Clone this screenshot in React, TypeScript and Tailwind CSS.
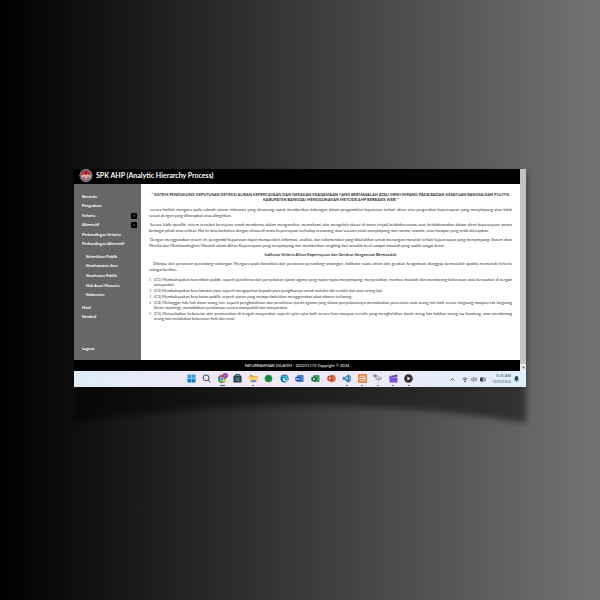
import React from "react";

const mainLinks = [
  { label: "Beranda" },
  { label: "Pengaduan" },
  { label: "Kriteria", toggle: true },
  { label: "Alternatif", toggle: true },
  { label: "Perbandingan Kriteria" },
  { label: "Perbandingan Alternatif" },
];

const criteriaLinks = [
  "Ketertiban Publik",
  "Keselamatan Jiwa",
  "Kesehatan Publik",
  "Hak Asasi Manusia",
  "Kebencian",
];

const indicators = [
  "(C1) Membahayakan ketertiban publik, seperti penafsiran dan penyebaran ajaran agama yang nyata-nyata menyimpang, menyesatkan, memicu masalah dan mendorong kekacauan atau kerusuhan di tengah masyarakat.",
  "(C2) Membahayakan keselamatan jiwa, seperti mengajarkan kepada para pengikutnya untuk melukai diri sendiri dan atau orang lain.",
  "(C3) Membahayakan kesehatan publik, seperti ajaran yang memperbolehkan menggunakan obat-obatan terlarang.",
  "(C4) Melanggar hak-hak dasar orang lain, seperti pengkondisian dan penafsiran ajaran agama yang dalam penyebarannya memaksakan pencucian otak orang lain baik secara langsung maupun tak langsung (brain-washing), memobilisasi pendanaan secara manipulatif dari masyarakat.",
  "(C5) Menyebarkan kebencian dan permusuhan di tengah masyarakat, seperti syiar-syiar baik secara lisan maupun tertulis yang menghalalkan darah orang lain bahkan orang tua kandung, atau mendorong orang lain melakukan kekerasan fisik dan teror.",
];

function Logo() {
  return (
    <svg viewBox="0 0 28 28" className="size-[14px] shrink-0" aria-hidden="true">
      <circle cx="14" cy="13" r="13" fill="#a9a5a8" />
      <circle cx="14" cy="13" r="12" fill="#5b5f72" />
      <circle cx="14" cy="13" r="9.5" fill="#d9c4c6" />
      <path d="M5 12a9 9 0 0 1 18 0l-3 1-2-3-4 3-4-3-2 3z" fill="#c8282c" />
      <path d="M7 17l4-3 3 2 3-2 4 3-3 4h-8z" fill="#b5474a" />
      <path d="M11 12h6v5l-3 3-3-3z" fill="#e0b9ae" />
      <path d="M13 5h2v5h-2z" fill="#2f2628" />
    </svg>
  );
}

function Letter({ color, dark, children }: { color: string; dark: string; children: React.ReactNode }) {
  return (
    <>
      <rect x="5" y="2" width="14" height="16" rx="2" fill={color} />
      <rect x="1" y="6" width="11" height="10" rx="1" fill={dark} />
      {children}
    </>
  );
}

const apps: { name: string; running?: boolean; active?: boolean; art: React.ReactNode }[] = [
  {
    name: "Start",
    art: (
      <>
        <path d="M1 1h8.5v8.5H1zM10.5 1H19v8.5h-8.5z" fill="#2fa3e0" />
        <path d="M1 10.500h8.500V19H1zM10.500 10.500H19V19h-8.500z" fill="#147cc4" />
      </>
    ),
  },
  {
    name: "Search",
    art: (
      <g fill="none" stroke="#343342" strokeWidth="2">
        <circle cx="9" cy="8.500" r="6.500" />
        <path d="M13.500 13.500L19 19" />
      </g>
    ),
  },
  {
    name: "Chrome",
    active: true,
    art: (
      <>
        <circle cx="9" cy="11" r="9" fill="#2e9c4f" />
        <path d="M1.200 6.500A9 9 0 0 1 17 7L9 11z" fill="#dc4437" />
        <path d="M18 9a9 9 0 0 1-9 11l4-8z" fill="#f3c531" />
        <circle cx="9" cy="11" r="4.500" fill="#fff" />
        <circle cx="9" cy="11" r="3.300" fill="#3d7de0" />
        <circle cx="16" cy="3.500" r="6" fill="#9143a7" />
        <path d="M14.500 1.500h3v4h-3z" fill="#c58bd4" />
      </>
    ),
  },
  {
    name: "Store",
    art: (
      <>
        <path d="M6 4V1h8v3" fill="none" stroke="#1c4a70" strokeWidth="2" />
        <rect x="1" y="3.500" width="18" height="15.500" rx="2" fill="#1d3f61" />
        <path d="M6 7.500h3.500V11H6z" fill="#8a6d5c" />
        <path d="M10.500 7.500H14V11h-3.500z" fill="#6c9a62" />
        <path d="M6 12h3.500v3.500H6z" fill="#38a5e0" />
        <path d="M10.500 12H14v3.500h-3.500z" fill="#b59d55" />
      </>
    ),
  },
  {
    name: "Files",
    running: true,
    art: (
      <>
        <path d="M1 2h7l2 3h9v5H1z" fill="#d9a12e" />
        <path d="M1 6h18v12H1z" fill="#f7cf62" />
        <path d="M5 14h10v4H5z" fill="#3b8ed0" />
      </>
    ),
  },
  {
    name: "Spotify",
    art: (
      <>
        <circle cx="10" cy="10" r="8.500" fill="#1c9a48" />
        <path d="M5 7q5-2 10 1M5.500 10.500q5-1.500 8.500 1M6 13.500q4-1 7 .8" fill="none" stroke="#0d5e2b" strokeWidth="1.500" />
      </>
    ),
  },
  {
    name: "Edge",
    art: (
      <>
        <circle cx="10" cy="10" r="9" fill="#1576bd" />
        <path d="M1.500 9a9 9 0 0 1 17.300 2c0 3-5 3.500-6 1.500C14 7 7 4 1.500 9z" fill="#37bcb8" />
        <path d="M19 13c-3 2-8 1.500-8-1.500 0-2-2-3-4-2-2 5 4 8 9 7z" fill="#e6f3fb" />
      </>
    ),
  },
  {
    name: "Word",
    art: (
      <Letter color="#3c82d2" dark="#174a9c">
        <path d="M3 8.500l1.500 5 2-4 2 4 1.500-5" fill="none" stroke="#fff" strokeWidth="1.300" />
      </Letter>
    ),
  },
  {
    name: "Excel",
    art: (
      <Letter color="#36a269" dark="#11633b">
        <path d="M4 8l5 6M9 8l-5 6" fill="none" stroke="#fff" strokeWidth="1.500" />
      </Letter>
    ),
  },
  {
    name: "PowerPoint",
    art: (
      <>
        <circle cx="11" cy="10" r="8.500" fill="#e36a4a" />
        <rect x="1" y="5" width="11" height="10" rx="1" fill="#b9341d" />
        <path d="M5 13.500v-6h2.500a1.800 1.800 0 0 1 0 3.500H5" fill="none" stroke="#fff" strokeWidth="1.400" />
      </>
    ),
  },
  {
    name: "VS Code",
    running: true,
    art: (
      <g fill="none" strokeWidth="3" strokeLinejoin="round">
        <path d="M14 3v14L2 7" stroke="#1c6fb5" />
        <path d="M2 13L14 3l4 2v10l-4 2" stroke="#2b8bd0" />
      </g>
    ),
  },
  {
    name: "XAMPP",
    running: true,
    art: (
      <>
        <rect x="0" y="0" width="20" height="20" rx="3" fill="#e8833b" />
        <path d="M6 5h8c1 0 2 1 2 2.500S15 10 14 10H6c-1 0-2-1-2-2.500S5 5 6 5zM6 10h8c1 0 2 1 2 2.500S15 15 14 15H6c-1 0-2-1-2-2.500S5 10 6 10z" fill="none" stroke="#fff" strokeWidth="1.800" />
      </>
    ),
  },
  {
    name: "Snipping Tool",
    running: true,
    art: (
      <g fill="none" strokeWidth="1.800">
        <path d="M7 1v11h11" stroke="#7e8b99" />
        <path d="M2 4h10v14" stroke="#a7afb9" />
        <circle cx="4" cy="4" r="2.500" stroke="#56616e" />
        <circle cx="16" cy="9" r="2.500" stroke="#c98c74" />
      </g>
    ),
  },
  {
    name: "Clipchamp",
    running: true,
    art: (
      <>
        <path d="M1 5l17-4 1 5-18 3z" fill="#5b30a5" />
        <path d="M1 8h18v11H1z" fill="#8151d8" />
        <path d="M4 4.500l4 3M10 3l4 3" stroke="#b994f2" strokeWidth="2" />
      </>
    ),
  },
  {
    name: "Media Player",
    running: true,
    art: (
      <>
        <circle cx="10" cy="10" r="9.500" fill="#282126" />
        <circle cx="10" cy="10" r="6.500" fill="none" stroke="#70564a" strokeWidth="1" />
        <path d="M7.500 5.500l7 4.500-7 4.500z" fill="#fff" />
      </>
    ),
  },
];

function Taskbar() {
  return (
    <footer className="grid h-4 grid-cols-[1fr_auto_1fr] items-center bg-linear-to-r/srgb from-[#dfedf8] via-[#f3e6f5] via-40% to-[#e0effa]">
      <div />
      <nav aria-label="Taskbar" className="grid w-[233px] grid-cols-15">
        {apps.map((app) => (
          <button
            key={app.name}
            aria-label={app.name}
            className="flex h-4 flex-col items-center justify-end gap-px"
          >
            <svg viewBox="0 0 20 20" className="size-[9px] overflow-visible" aria-hidden="true">
              {app.art}
            </svg>
            <span className="flex h-[3px] items-center">
              {app.active && <span className="h-px w-[5px] bg-[#28698f]" />}
              {app.running && <span className="h-px w-[2px] bg-[#777582]" />}
            </span>
          </button>
        ))}
      </nav>
      <div className="flex items-center justify-end gap-[3px] pr-[7px] text-[#34414c]">
        <svg viewBox="0 0 10 10" className="mr-[4px] size-[5px]" fill="none" stroke="currentColor" strokeWidth="1.600" aria-hidden="true">
          <path d="M1 7l4-4 4 4" />
        </svg>
        <svg viewBox="0 0 12 10" className="h-[5px] w-[6px]" fill="none" stroke="currentColor" strokeWidth="1.400" aria-hidden="true">
          <path d="M1 4q5-5 10 0M3 6q3-3 6 0" />
          <circle cx="6" cy="8.500" r="1" fill="currentColor" />
        </svg>
        <svg viewBox="0 0 12 10" className="h-[5px] w-[6px]" fill="none" stroke="currentColor" strokeWidth="1.200" aria-hidden="true">
          <path d="M1 3.500h2L6 1v8L3 6.500H1zM8 3q2 2 0 4M10 1.500q3 3.500 0 7" />
        </svg>
        <svg viewBox="0 0 12 10" className="h-[5px] w-[6px]" fill="none" stroke="currentColor" strokeWidth="1.400" aria-hidden="true">
          <path d="M1 2h9v6H1zM11.300 4v2" />
          <path d="M1 2h4v6H1z" fill="currentColor" />
        </svg>
        <div className="w-[22px] text-right font-['Open_Sans',sans-serif] text-[4px] leading-[6px]">
          <div>9:26 AM</div>
          <div>10/9/2024</div>
        </div>
        <svg viewBox="0 0 10 12" className="h-[6px] w-[5px]" fill="#1a4b6b" aria-hidden="true">
          <path d="M5 0a3.500 3.500 0 0 1 3.500 3.500V7L10 9H0l1.500-2V3.500A3.500 3.500 0 0 1 5 0zM3.500 10h3a1.500 1.500 0 0 1-3 0z" />
        </svg>
      </div>
    </footer>
  );
}

function Sidebar() {
  return (
    <nav className="w-[67px] shrink-0 bg-[#676767] pt-2 pr-1 pl-2 text-[4px] leading-[6px] font-bold text-white">
      <ul className="grid h-[57px] grid-rows-6">
        {mainLinks.map((link) => (
          <li key={link.label} className="flex items-center justify-between">
            <a href="#" className="whitespace-nowrap">{link.label}</a>
            {link.toggle && (
              <button aria-label={"Buka " + link.label} className="flex size-[6px] items-center justify-center rounded-[1px] bg-black">
                <svg viewBox="0 0 8 8" className="size-[2px]" fill="#999" aria-hidden="true">
                  <path d="M0 2h8L4 7z" />
                </svg>
              </button>
            )}
          </li>
        ))}
      </ul>
      <ul className="mt-[3px] grid h-[48px] grid-rows-5 pl-1">
        {criteriaLinks.map((label) => (
          <li key={label} className="flex items-center">
            <a href="#" className="whitespace-nowrap">{label}</a>
          </li>
        ))}
      </ul>
      <ul className="mt-[3px] grid h-[19px] grid-rows-2">
        <li className="flex items-center"><a href="#">Hasil</a></li>
        <li className="flex items-center"><a href="#">Kembali</a></li>
      </ul>
      <a href="#" className="mt-6 block">Logout</a>
    </nav>
  );
}

function Content() {
  return (
    <main className="min-w-0 flex-1 bg-white px-2 pt-2 text-justify text-[4px] leading-[6px] text-[#333]">
      <h2 className="text-center leading-[5px] font-bold">
        “ SISTEM PENDUKUNG KEPUTUSAN DETEKSI ALIRAN KEPERCAYAAN DAN GERAKAN KEAGAMAAN YANG BERMASALAH ATAU MENYIMPANG PADA BADAN KESATUAN BANGSA DAN POLITIK
        <br />
        KABUPATEN BANGGAI MENGGUNAKAN METODE AHP BERBASIS WEB ”
      </h2>
      <div className="mt-[5px] space-y-[3px]">
        <p className="indent-px">
          secara harfiah mengacu pada sebuah sistem informasi yang dirancang untuk memberikan dukungan dalam pengambilan keputusan terkait aliran atau pergerakan kepercayaan yang menyimpang atau tidak sesuai dengan yang diharapkan atau diinginkan.
        </p>
        <p className="indent-px">
          Secara lebih spesifik, sistem tersebut bertujuan untuk membantu dalam menganalisis, memahami, dan mengelola situasi di mana terjadi ketidaksesuaian atau ketidakcocokan dalam aliran kepercayaan antara berbagai pihak atau entitas. Hal ini bisa berkaitan dengan situasi di mana kepercayaan terhadap seseorang atau sesuatu telah menyimpang dari norma, standar, atau harapan yang telah ditetapkan.
        </p>
        <p className="indent-px">
          Dengan menggunakan sistem ini, pengambil keputusan dapat memperoleh informasi, analisis, dan rekomendasi yang dibutuhkan untuk menangani masalah terkait kepercayaan yang menyimpang. Sistem akan Menilai dan Membandingkan Masalah dalam Aliran Kepercayaan yang menyimpang dan memberikan rangking dari masalah kecil sampai masalah yang sudah sangat berat.
        </p>
        <h3 className="text-center font-bold">Indikator Kriteria Aliran Kepercayaan dan Gerakan Keagamaan Bermasalah</h3>
        <p className="indent-1">
          Ditinjau dari peraturan perundang-undangan Mengacu pada konstitusi dan peraturan perundang-undangan, indikator suatu aliran dan gerakan keagamaan dianggap bermasalah apabila memenuhi kriteria sebagai berikut :
        </p>
      </div>
      <ol className="mt-1 space-y-px leading-[5px]">
        {indicators.map((text, i) => (
          <li key={text} className="flex">
            <span className="w-[5px] shrink-0 text-[#777]">{i + 1}</span>
            <span>{text}</span>
          </li>
        ))}
      </ol>
    </main>
  );
}

export default function App() {
  return (
    <div className="min-h-screen bg-linear-to-r/srgb from-black to-[#737373] px-[74px] pt-[169px] font-['Lato',sans-serif]">
      <div className="relative">
        <svg
          viewBox="0 0 452 260"
          preserveAspectRatio="none"
          className="absolute inset-x-0 top-0 h-[260px] w-full overflow-visible"
          aria-hidden="true"
        >
          <defs>
            <filter id="soft" x="-5%" y="-5%" width="110%" height="110%">
              <feGaussianBlur stdDeviation="3" />
            </filter>
          </defs>
          <path d="M0 4H452V254Q226 218 0 254Z" fill="#000" fillOpacity="0.5" filter="url(#soft)" />
        </svg>
        <div className="relative">
          <div className="flex">
            <div className="flex min-w-0 flex-1 flex-col">
              <header className="flex h-[15px] items-start gap-[3px] bg-black pl-[5px] text-white">
                <Logo />
                <h1 className="text-[7px] leading-[12px] font-bold">SPK AHP (Analytic Hierarchy Process)</h1>
              </header>
              <div className="flex min-h-[176px]">
                <Sidebar />
                <Content />
              </div>
              <div className="h-[11px] bg-black text-center text-[4px] leading-[11px] text-white">
                FATURRAHMAN DJLATIM - 202211172 Copyright © 2024
              </div>
            </div>
            <div className="flex w-[6px] flex-col bg-[#c2c2c2]">
              <div className="mt-auto flex h-[7px] items-center justify-center bg-[#ececec]">
                <svg viewBox="0 0 8 8" className="size-[3px]" fill="#555" aria-hidden="true">
                  <path d="M0 2h8L4 7z" />
                </svg>
              </div>
            </div>
          </div>
          <Taskbar />
        </div>
      </div>
    </div>
  );
}
